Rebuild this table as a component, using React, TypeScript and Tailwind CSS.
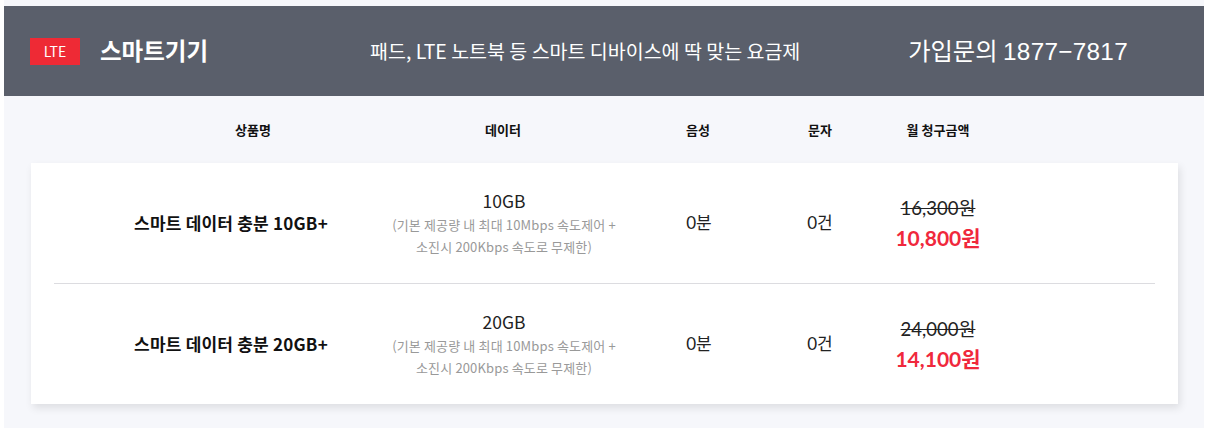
import React from "react";

const KR = "font-['Noto_Sans_CJK_KR',sans-serif]";
const LATO = "font-['Lato','Noto_Sans_CJK_KR',sans-serif]";

type Plan = { name: string; data: string; orig: string; price: string };

const plans: Plan[] = [
  { name: "스마트 데이터 충분 10GB+", data: "10GB", orig: "16,300원", price: "10,800원" },
  { name: "스마트 데이터 충분 20GB+", data: "20GB", orig: "24,000원", price: "14,100원" },
];

function Row({ p, last }: { p: Plan; last: boolean }) {
  return (
    <div className={"mx-[23px] flex items-center " + (last ? "h-[120px]" : "h-[121px] border-b border-[#dcdce0]")}>
      <div className="ml-[77px] w-[200px] text-center text-[17px] font-bold text-[#111] tracking-[0.2px] whitespace-nowrap">{p.name}</div>
      <div className="ml-[43px] w-[260px] text-center">
        <div className="text-[17.5px] leading-[26px] text-[#222]">{p.data}</div>
        <div className="text-[13px] leading-[22px] text-[#999] tracking-[0.15px] whitespace-nowrap">
          (기본 제공량 내 최대 10Mbps 속도제어 +<br />소진시 200Kbps 속도로 무제한)
        </div>
      </div>
      <div className={"ml-[15px] w-[100px] text-center text-[17px] text-[#222] " + LATO}>0분</div>
      <div className={"ml-[21px] w-[100px] text-center text-[17px] text-[#222] " + LATO}>0건</div>
      <div className={"ml-[8px] w-[120px] pt-[4px] text-center whitespace-nowrap " + LATO}>
        <div className="text-[18.5px] leading-[26px] text-[#222] line-through">{p.orig}</div>
        <div className="text-[21px] leading-[34px] font-bold text-[#f0283c]">{p.price}</div>
      </div>
    </div>
  );
}

export default function App() {
  return (
    <div className="bg-white w-[1207px] h-[428px] overflow-hidden">
      <div className={"ml-[4px] w-[1200px] h-[428px] bg-[#f6f7fb] pt-[6px] " + KR}>
        <div className="h-[90px] bg-[#5a5f6b] flex items-center text-white">
          <div className="w-[366px] flex items-center">
            <div className="ml-[26px] w-[50px] h-[27px] bg-[#ee2a35] flex items-center justify-center text-[14px] leading-none">LTE</div>
            <div className="ml-[20px] text-[23.5px] font-bold leading-none whitespace-nowrap">스마트기기</div>
          </div>
          <div className="text-[19.5px] leading-none whitespace-nowrap">패드, LTE 노트북 등 스마트 디바이스에 딱 맞는 요금제</div>
          <div className="ml-auto mr-[76px] text-[24.3px] leading-none whitespace-nowrap">
            가입문의 <span className="font-['Liberation_Sans','Noto_Sans_CJK_KR',sans-serif] tracking-[0.3px]">1877−7817</span>
          </div>
        </div>
        <div className="h-[67px] flex items-center pl-[149px] text-[13px] font-bold text-[#111]">
          <div className="w-[200px] text-center">상품명</div>
          <div className="ml-[50px] w-[200px] text-center">데이터</div>
          <div className="ml-[45px] w-[100px] text-center">음성</div>
          <div className="ml-[22px] w-[100px] text-center">문자</div>
          <div className="ml-[8px] w-[120px] text-center">월 청구금액</div>
        </div>
        <div className="ml-[27px] w-[1147px] bg-white shadow-[2px_4px_8px_rgba(0,0,0,0.10)]">
          {plans.map((p, i) => (
            <Row key={i} p={p} last={i === plans.length - 1} />
          ))}
        </div>
      </div>
    </div>
  );
}
